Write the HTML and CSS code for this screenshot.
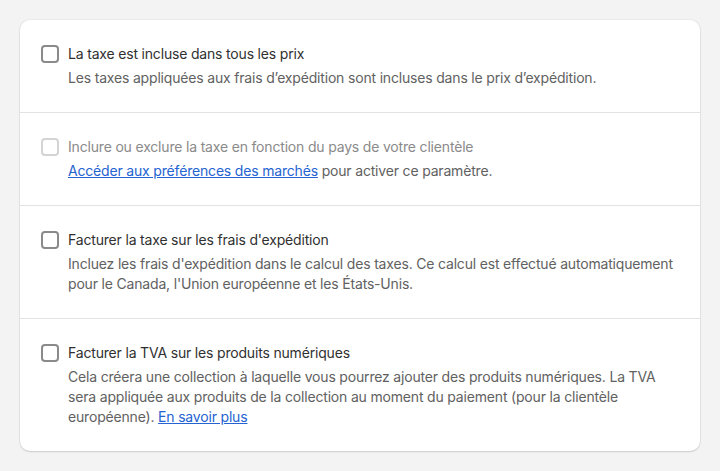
FILE: index.html
```html
<!DOCTYPE html>
<html lang="fr">
<head>
<meta charset="utf-8">
<link rel="stylesheet" href="styles.css">
</head>
<body>
<div class="card">
  <div class="section">
    <div class="choice">
      <span class="box"></span>
      <div class="body">
        <div class="label">La taxe est incluse dans tous les prix</div>
        <div class="help">Les taxes appliquées aux frais d’expédition sont incluses dans le prix d’expédition.</div>
      </div>
    </div>
  </div>
  <div class="section">
    <div class="choice disabled">
      <span class="box"></span>
      <div class="body">
        <div class="label">Inclure ou exclure la taxe en fonction du pays de votre clientèle</div>
        <div class="help"><a href="#">Accéder aux préférences des marchés</a> pour activer ce paramètre.</div>
      </div>
    </div>
  </div>
  <div class="section">
    <div class="choice">
      <span class="box"></span>
      <div class="body">
        <div class="label">Facturer la taxe sur les frais d'expédition</div>
        <div class="help">Incluez les frais d'expédition dans le calcul des taxes. Ce calcul est effectué automatiquement pour le Canada, l'Union européenne et les États-Unis.</div>
      </div>
    </div>
  </div>
  <div class="section">
    <div class="choice">
      <span class="box"></span>
      <div class="body">
        <div class="label">Facturer la TVA sur les produits numériques</div>
        <div class="help">Cela créera une collection à laquelle vous pourrez ajouter des produits numériques. La TVA sera appliquée aux produits de la collection au moment du paiement (pour la clientèle européenne). <a href="#">En savoir plus</a></div>
      </div>
    </div>
  </div>
</div>
</body>
</html>
```
FILE: styles.css
```css
html, body {
  margin: 0;
  padding: 0;
}
body {
  background: #f3f3f3;
  font-family: Inter, "Noto Sans", sans-serif;
  font-size: 14px;
  line-height: 20px;
  letter-spacing: -0.18px;
  color: #303030;
  padding: 20px;
}
.card {
  background: #ffffff;
  border-radius: 10px;
  box-shadow: 0 1px 2px rgba(0,0,0,0.14), 0 0 0 1px rgba(0,0,0,0.03);
}
.section {
  padding: 24px 20px 24px 21px;
  border-top: 1px solid #e3e3e3;
}
.section:first-child {
  border-top: none;
}
.choice {
  display: flex;
  gap: 9px;
}
.box {
  flex: none;
  width: 18px;
  height: 18px;
  box-sizing: border-box;
  border: 2px solid #8a8a8a;
  border-radius: 4px;
  margin-top: 1px;
}
.label {
  color: #303030;
}
.help {
  color: #616161;
  margin-top: 4px;
}
.help a {
  color: #2463d1;
  text-decoration: underline;
}
.disabled .box {
  border-color: #d4d4d4;
}
.disabled .label {
  color: #8a8a8a;
}
```
